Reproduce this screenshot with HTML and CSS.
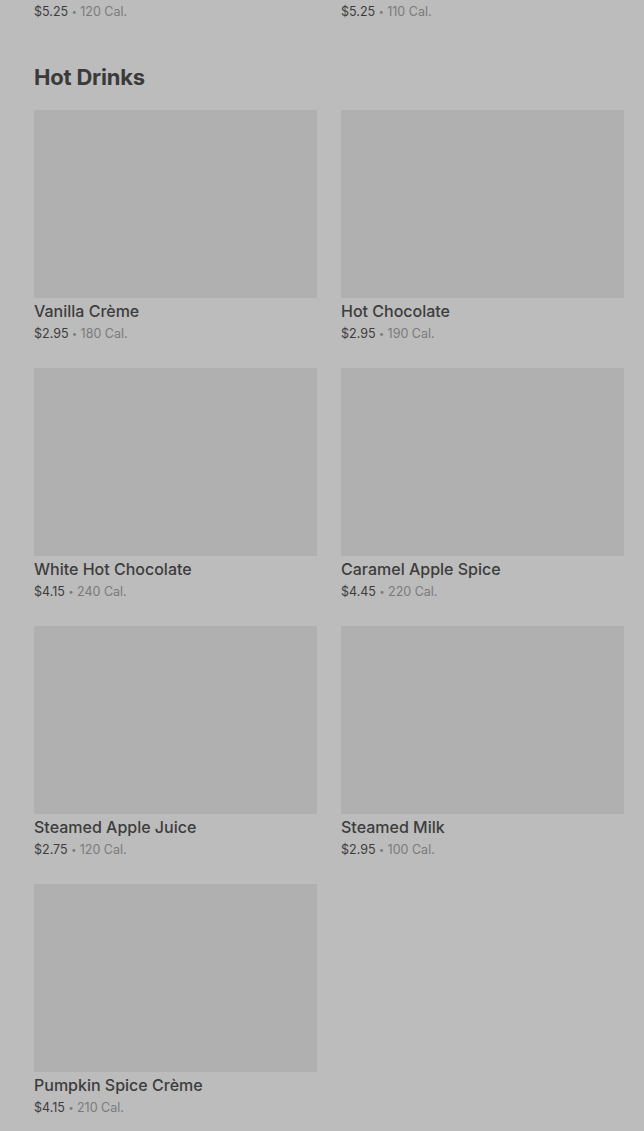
FILE: index.html
```html
<!DOCTYPE html>
<html>
<head>
  <title>Menu</title>
  <meta name="viewport" content="width=device-width, initial-scale=1.0">
  <link rel="stylesheet" href="styles.css">
</head>
<body>
  <div class="menu">
    <!-- tail of the previous section, scrolled past -->
    <div class="grid grid-tail">
      <div class="item">
        <div class="price"><span class="cost">$5.25</span> <span class="dot">•</span> 120 Cal.</div>
      </div>
      <div class="item">
        <div class="price"><span class="cost">$5.25</span> <span class="dot">•</span> 110 Cal.</div>
      </div>
    </div>

    <section class="section">
      <h2 class="section-title">Hot Drinks</h2>
      <div class="grid">
        <div class="item">
          <div class="thumb"></div>
          <div class="name">Vanilla Crème</div>
          <div class="price"><span class="cost">$2.95</span> <span class="dot">•</span> 180 Cal.</div>
        </div>
        <div class="item">
          <div class="thumb"></div>
          <div class="name">Hot Chocolate</div>
          <div class="price"><span class="cost">$2.95</span> <span class="dot">•</span> 190 Cal.</div>
        </div>
        <div class="item">
          <div class="thumb"></div>
          <div class="name">White Hot Chocolate</div>
          <div class="price"><span class="cost">$4.15</span> <span class="dot">•</span> 240 Cal.</div>
        </div>
        <div class="item">
          <div class="thumb"></div>
          <div class="name">Caramel Apple Spice</div>
          <div class="price"><span class="cost">$4.45</span> <span class="dot">•</span> 220 Cal.</div>
        </div>
        <div class="item">
          <div class="thumb"></div>
          <div class="name">Steamed Apple Juice</div>
          <div class="price"><span class="cost">$2.75</span> <span class="dot">•</span> 120 Cal.</div>
        </div>
        <div class="item">
          <div class="thumb"></div>
          <div class="name">Steamed Milk</div>
          <div class="price"><span class="cost">$2.95</span> <span class="dot">•</span> 100 Cal.</div>
        </div>
        <div class="item">
          <div class="thumb"></div>
          <div class="name">Pumpkin Spice Crème</div>
          <div class="price"><span class="cost">$4.15</span> <span class="dot">•</span> 210 Cal.</div>
        </div>
      </div>
    </section>
  </div>
</body>
</html>
```

FILE: styles.css
```css
body {
  margin: 0;
  background-color: #bcbcbc;
  font-family: Inter, "Noto Sans", sans-serif;
  color: #3a3a3a;
  overflow: hidden;
}

.menu {
  padding: 0 20px 0 34px;
}

.grid {
  display: grid;
  grid-template-columns: 283px 283px;
  column-gap: 24px;
  row-gap: 25px;
}

.grid-tail {
  margin-top: -1px;
}

.section {
  margin-top: 44px;
}

.section-title {
  margin: 0 0 21px 0;
  font-size: 22px;
  line-height: 24px;
  font-weight: 700;
  letter-spacing: -0.2px;
  color: #3a3a3a;
}

.thumb {
  height: 188px;
  background-color: #b0b0b0;
}

.name {
  margin-top: 3px;
  font-size: 16px;
  line-height: 20px;
  font-weight: 500;
  color: #3d3d3d;
}

.price {
  margin-top: 4px;
  font-size: 12.5px;
  line-height: 18px;
  color: #7a7a7a;
}

.price .cost {
  color: #3d3d3d;
}

.price .dot {
  font-size: 9px;
  vertical-align: 1px;
}
```
